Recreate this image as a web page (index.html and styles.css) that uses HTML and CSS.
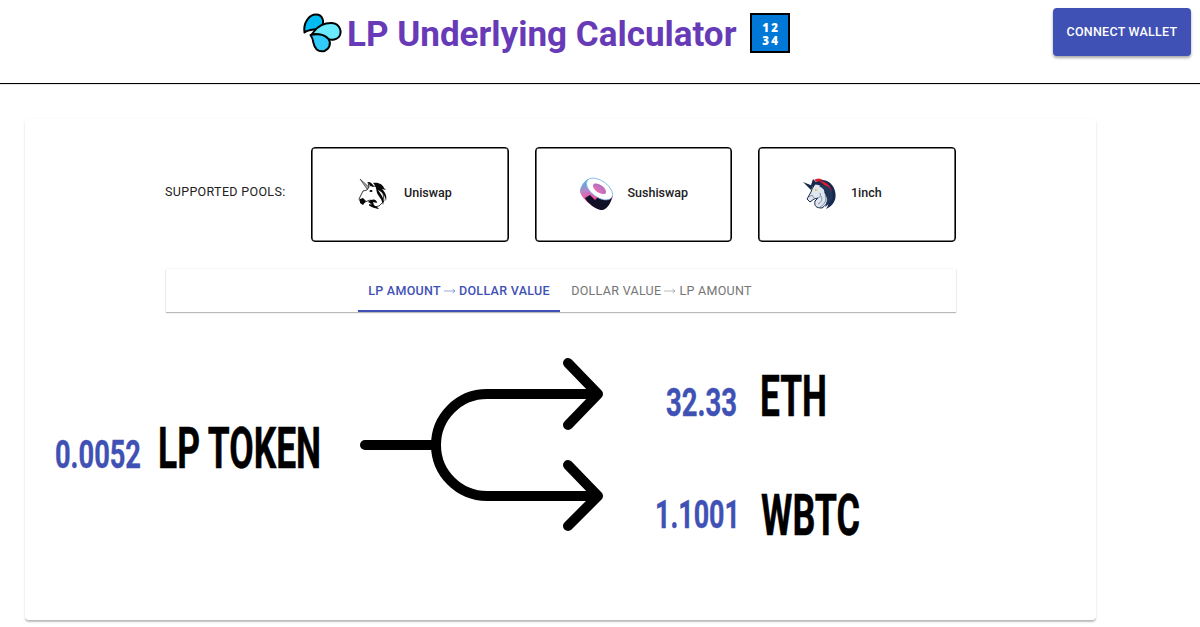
FILE: index.html
```html
<!DOCTYPE html>
<html lang="en">
<head>
<meta charset="utf-8">
<title>LP Underlying Calculator</title>
<link rel="stylesheet" href="styles.css">
</head>
<body>
<header class="header">
  <svg class="drops" viewBox="0 0 40 40" aria-hidden="true">
    <path d="M2.500 19.500C1 10 7 1.500 14 1.500c7 0 9 8 5 12.500-4 4-11 1-16.500 5.500Z" fill="#00bcf2"/>
    <path d="M12 18.500C17 12 22 10 29 10c7 0 11 6 9 12-2 5-9 6-14 3-4-3-8-4-14-4Z" fill="#69eaff"/>
    <path d="M8.500 22c7-1.500 14-.5 18 4 3 4 1 10-4 12-7 1.500-10-3-11-8-.5-3.500-1.500-6-3-8Z" fill="#32ccfa"/>
  </svg>
  <h1 class="title">LP Underlying Calculator</h1>
  <div class="numbers"><span>1</span><span>2</span><span>3</span><span>4</span></div>
  <button class="connect">CONNECT WALLET</button>
</header>
<main class="card">
  <section class="pools">
    <span class="pools-label">SUPPORTED POOLS:</span>
    <div class="pool">
      <svg class="logo uniswap" viewBox="0 0 34 34" aria-hidden="true">
        <path d="M3 2 13 11 10 12Z" fill="#aaa" stroke="#333" stroke-width=".7"/>
        <path d="M10 13 12 10 11 5l4 4c5 0 9 2 11 7l1 8-5 5-5 1-5-2 4-3-3-2-5 2-4 1-2-4 4-8Z" fill="#fff" stroke="#222" stroke-width=".9"/>
        <path d="M11 5c3 0 5 2 6 5l-4-1ZM16 6c6-1 10 2 11 5l2 2-4-1c4 4 5 8 4 12-1-6-4-9-8-11 4 6 7 9 5 15-1-6-4-8-6-12-1-5-1-7-4-10ZM3 22l3-1 3 3-3 4-3-2ZM11 25c4-4 9-3 9 1l-4-1 1 3c2 2 3 1 5 4-4-1-7-1-10-4l3-1Z" fill="#080808"/>
        <ellipse cx="14" cy="14" rx="1.500" ry="1"/>
      </svg>
      <span>Uniswap</span>
    </div>
    <div class="pool">
      <svg class="logo" viewBox="0 0 34 34" aria-hidden="true">
        <defs><linearGradient id="rice" x1=".2" y1="0" x2=".5" y2="1"><stop stop-color="#35b9ed"/><stop offset=".35" stop-color="#b985c7"/><stop offset=".65" stop-color="#f94b9a"/></linearGradient></defs>
        <path d="M8 3C3 6 0 12 0 15c0 6 14 19 22 18 4-1 10-8 11-13Z" fill="url(#rice)"/>
        <path d="M5 22l5-3 5 5 4-4 5 4 8-4c0 6-5 13-9 14-5 1-15-6-18-12Z" fill="#101126"/>
        <ellipse cx="19.500" cy="13" rx="15" ry="8.300" transform="rotate(35 19.500 13)" fill="#fff" stroke="#65a9dc" stroke-width=".7"/>
        <ellipse cx="19.500" cy="12.700" rx="7.500" ry="3.900" transform="rotate(34 19.500 12.700)" fill="#d76fb8"/>
        <path d="M14 8.700c5-1 10 5 11 9" fill="none" stroke="#a475c2" stroke-width="1.500"/>
      </svg>
      <span>Sushiswap</span>
    </div>
    <div class="pool">
      <svg class="logo" viewBox="0 0 34 34" aria-hidden="true">
        <path d="M0 6 10 10 8 14ZM8 9l2-6 3 3c7-5 17 0 19 9 2 8-1 14-9 18 3-4 3-7 2-10l-5-6Z" fill="#17284c"/>
        <path d="M11 4c3-2 6-2 9 0l-6 2ZM16 5c8 0 14 6 13 16-1-6-5-10-9-13Z" fill="#d51e32"/>
        <path d="M9 13l3-5c6 0 10 4 10 9 4 6 3 11-3 15-6 0-8-2-7-7l3-3-4 1-4 3-3-3 4-7Z" fill="#dfe6ee" stroke="#17284c" stroke-width="1"/>
        <path d="M16 10c8 4 11 12 6 21 7-4 9-11 7-15-2-5-7-8-13-6Z" fill="#203759"/>
        <path d="M12 13l3 1-3 1Z" fill="#e0b42d"/>
        <path d="M6 21l3-2 2 3M14 22c3 0 4-2 3-5M22 19c2 5 0 9-5 12M18 20c2 3 0 7-3 8" fill="none" stroke="#7890ac"/>
      </svg>
      <span>1inch</span>
    </div>
  </section>
  <nav class="tabs">
    <span class="tab active">LP AMOUNT <svg class="arrow" viewBox="0 0 12 8"><path d="M0 4h11M8.500 2 11 4 8.500 6"/></svg> DOLLAR VALUE</span>
    <span class="tab">DOLLAR VALUE <svg class="arrow" viewBox="0 0 12 8"><path d="M0 4h11M8.500 2 11 4 8.500 6"/></svg> LP AMOUNT</span>
  </nav>
  <section class="flow">
    <div class="amount source">
      <svg class="value" width="86" height="50"><text x="0" y="45" textLength="86" lengthAdjust="spacingAndGlyphs">0.0052</text></svg>
      <svg class="token" width="164" height="50"><text x="0" y="45" textLength="163" lengthAdjust="spacingAndGlyphs">LP TOKEN</text></svg>
    </div>
    <svg class="fork" viewBox="0 0 244 174" aria-hidden="true">
      <path d="M5 87H76M238 36H127A51 51 0 0 0 76 87A51 51 0 0 0 127 138H238M208 5 238 36 208 67M208 107 238 138 208 168"/>
    </svg>
    <div class="outputs">
      <div class="amount">
        <svg class="value" width="84" height="50"><text x="11" y="45" textLength="71" lengthAdjust="spacingAndGlyphs">32.33</text></svg>
        <svg class="token" width="110" height="50"><text x="-2" y="45" textLength="67" lengthAdjust="spacingAndGlyphs">ETH</text></svg>
      </div>
      <div class="amount second">
        <svg class="value" width="84" height="50"><text x="0" y="38" textLength="85" lengthAdjust="spacingAndGlyphs">1.1001</text></svg>
        <svg class="token" width="110" height="50"><text x="-1" y="45" textLength="99" lengthAdjust="spacingAndGlyphs">WBTC</text></svg>
      </div>
    </div>
  </section>
</main>
</body>
</html>
```

FILE: styles.css
```css
* { box-sizing: border-box; }
body { margin: 0; min-height: 627px; background: #fff; font-family: Roboto, sans-serif; color: #212121; }
.header { height: 84px; border-bottom: 1px solid #000; box-shadow: 0 1px 0 #e4e4e4; display: flex; align-items: flex-start; padding: 8px 9px 0 302px; }
.drops { width: 40px; height: 40px; margin-top: 5px; stroke: #000; stroke-width: 2; stroke-linejoin: round; overflow: visible; }
.title { margin: 6px 0 0 5px; width: 389px; font-size: 35px; line-height: 41px; font-weight: 700; color: #673ab7; white-space: nowrap; }
.numbers { width: 40px; height: 40px; margin: 5px 0 0 14px; padding: 6px 9px; border: 2px solid #000; background: #0078d7; color: #fff; display: grid; grid-template-columns: 9px 9px; grid-template-rows: 13px 13px; font: 800 11.5px/13px "Open Sans", sans-serif; text-align: center; }
.connect { margin-left: auto; width: 138px; height: 48px; padding: 0 0 2px; border: 0; border-radius: 4px; background: #3f51b5; color: #fff; font: 500 12.5px Roboto, sans-serif; letter-spacing: .25px; box-shadow: 0 2px 3px rgba(0,0,0,.35); }
.card { width: 1071px; height: 502px; margin: 35px 0 0 25px; padding-top: 28px; border-radius: 4px; border-bottom: 1px solid #bdbdbd; box-shadow: 0 1px 1px rgba(0,0,0,.16), 0 1px 3px rgba(0,0,0,.1); }
.pools { display: flex; align-items: center; gap: 26px; height: 95px; padding-left: 140px; }
.pools-label { width: 120px; font-size: 12.5px; letter-spacing: .33px; white-space: nowrap; margin-top: -6px; }
.pool { width: 197.5px; height: 95px; border: 1px solid #000; box-shadow: inset 0 0 0 .6px #000; border-radius: 4px; display: flex; align-items: center; gap: 14px; padding: 0 0 3px 44px; font-size: 12.5px; font-weight: 500; }
.logo { width: 34px; height: 34px; }
.uniswap { position: relative; top: 1px; left: 1px; }
.pool span { margin-top: -1px; }
.tabs { width: 790px; height: 43px; margin: 27px 0 0 140.5px; padding-right: 2px; display: flex; justify-content: center; box-shadow: 0 1px 1px rgba(0,0,0,.25), 0 0 2px rgba(0,0,0,.1); }
.tab { width: 202px; display: flex; align-items: center; justify-content: center; gap: 3px; font-size: 12.5px; letter-spacing: .3px; color: #757575; white-space: nowrap; }
.tab + .tab { padding-left: 2px; }
.active { color: #3f51b5; border-bottom: 2px solid #3f51b5; padding: 2px 0 0 1px; font-weight: 500; }
.arrow { width: 12px; height: 8px; fill: none; stroke: currentColor; stroke-width: .5; }
.flow { display: flex; align-items: flex-start; padding: 46px 0 0 30px; }
.amount { display: flex; gap: 20px; height: 50px; }
.amount svg { display: block; flex: none; overflow: visible; }
.source { margin-top: 65px; gap: 17px; }
.value { fill: #3f51b5; stroke: #3f51b5; stroke-width: .4px; font-size: 39px; font-weight: 700; }
.token { fill: #000; stroke: #000; stroke-width: .5px; font-size: 57px; font-weight: 700; }
.fork { width: 244px; height: 174px; margin-left: 37.5px; fill: none; stroke: #000; stroke-width: 10; stroke-linecap: round; stroke-linejoin: round; }
.outputs { margin: 13px 0 0 51.5px; }
.outputs .amount { gap: 23px; }
.second { margin-top: 69px; }
```
